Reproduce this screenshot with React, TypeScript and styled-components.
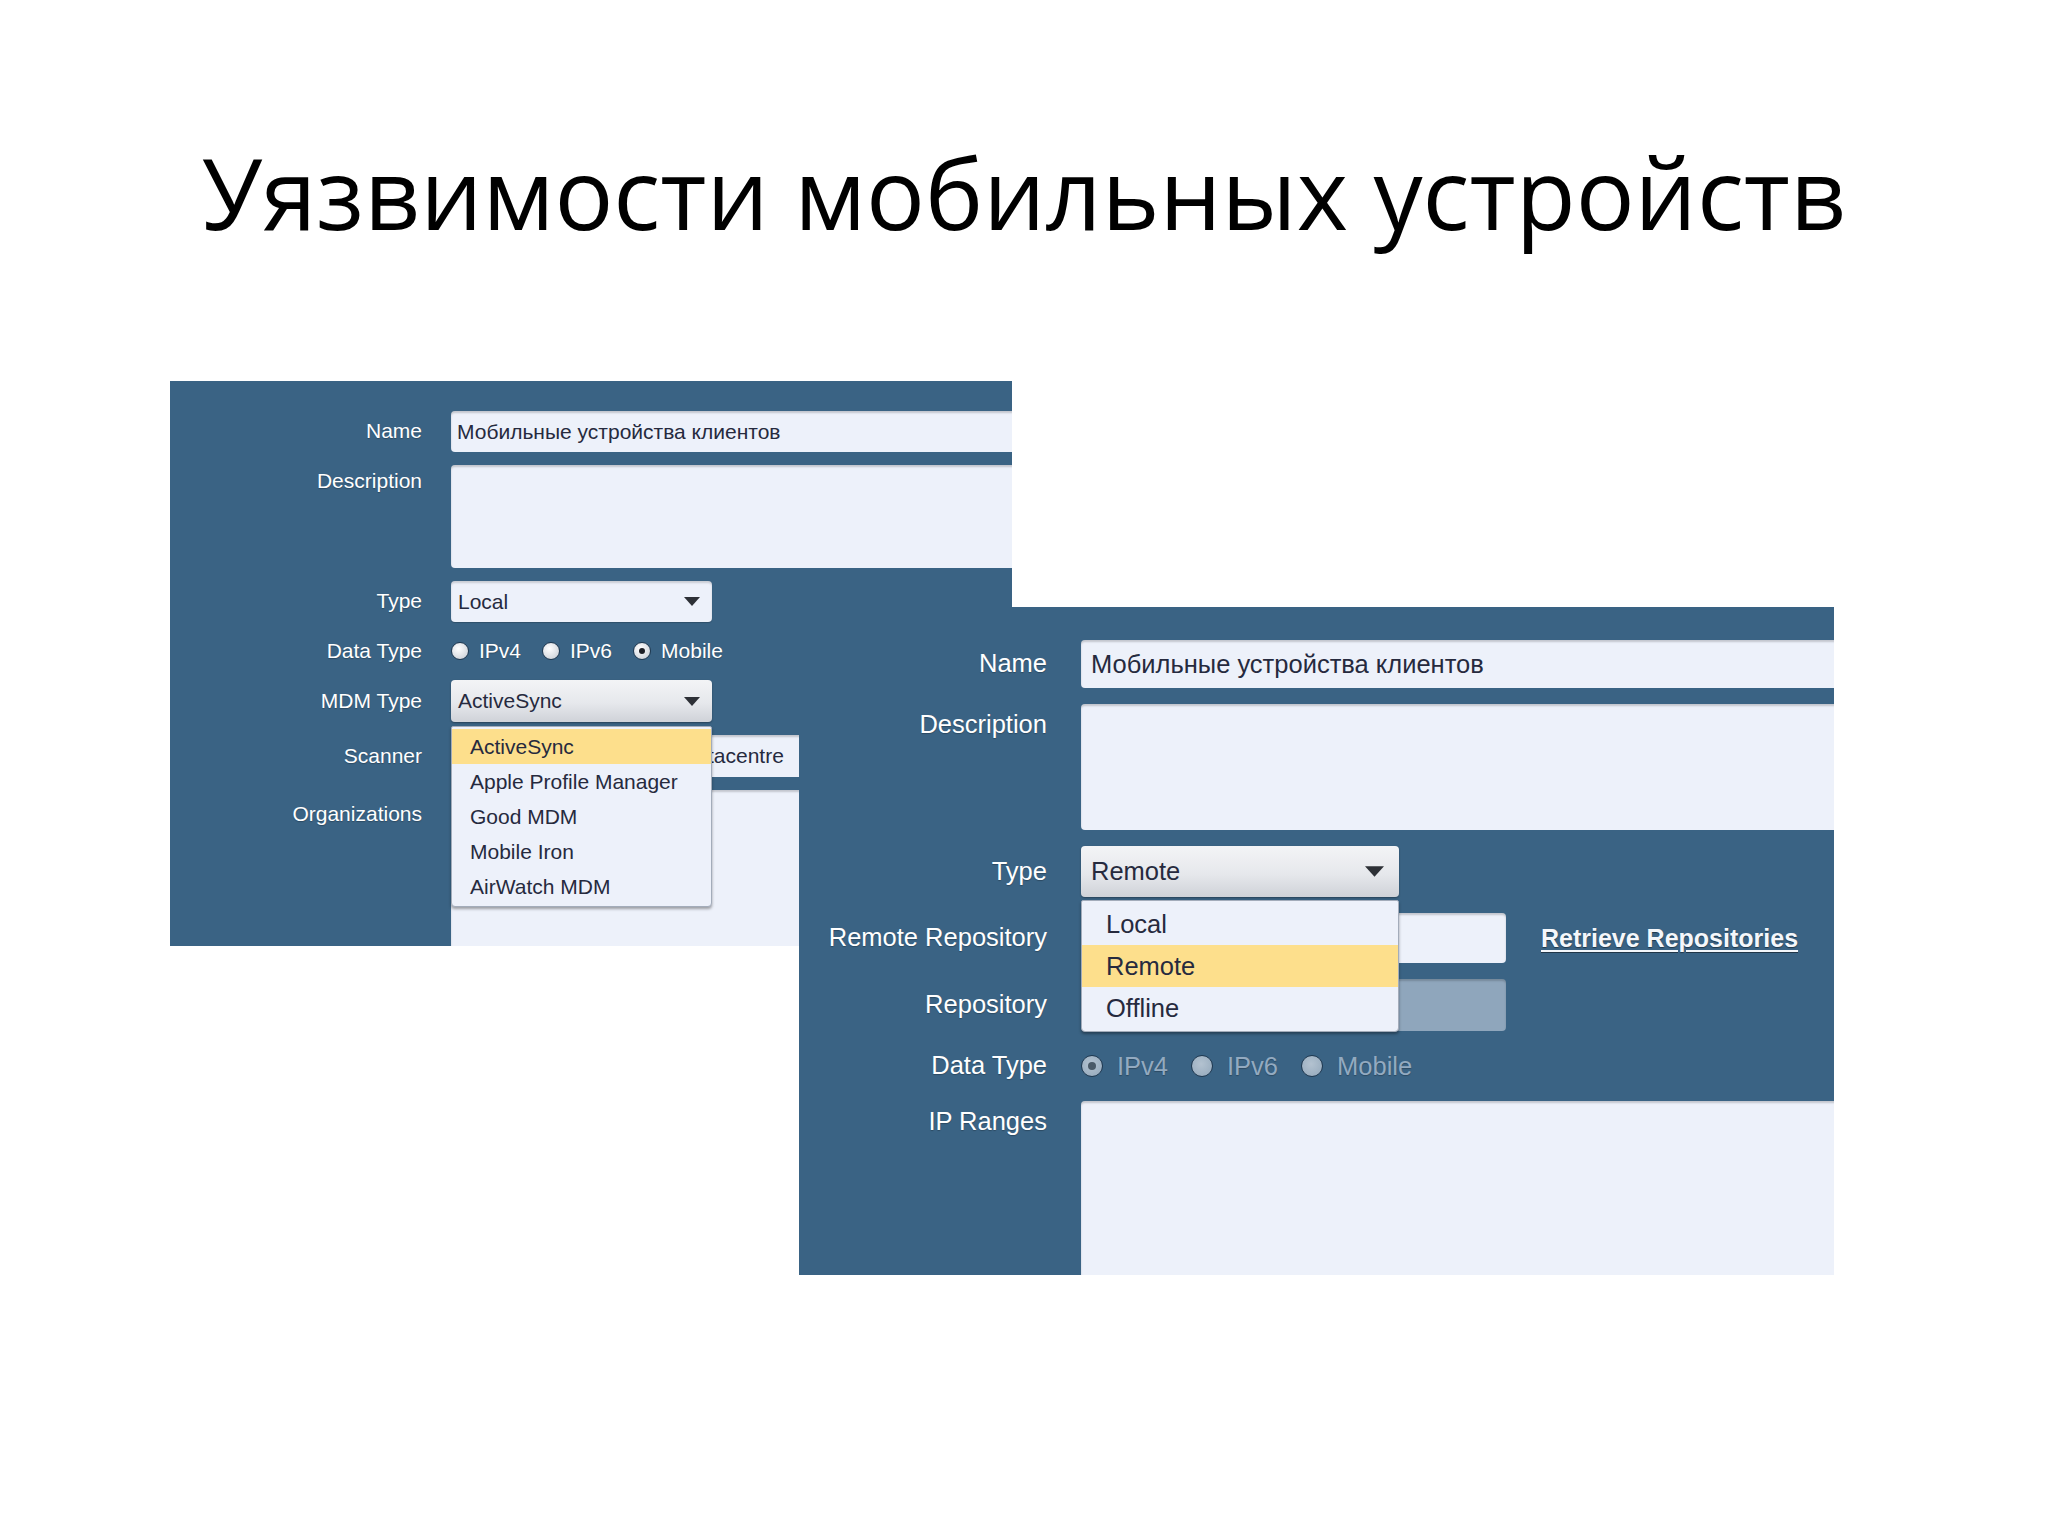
import React from 'react';
import styled, { createGlobalStyle, css } from 'styled-components';

const GlobalStyle = createGlobalStyle`
  html, body {
    margin: 0;
    padding: 0;
    background: #ffffff;
  }
  body {
    width: 2048px;
    height: 1536px;
    overflow: hidden;
    font-family: "Liberation Sans", Arial, sans-serif;
  }
`;

const PANEL_BLUE = '#3a6384';
const FIELD_BG = '#edf1fa';
const FIELD_TEXT = '#262a3e';
const HIGHLIGHT = '#fddf8c';

const Slide = styled.div`
  width: 2048px;
  height: 1536px;
  display: flex;
  flex-direction: column;
  background: #ffffff;
`;

const Title = styled.h1`
  margin: 0;
  height: 300px;
  box-sizing: border-box;
  padding-top: 143px;
  text-align: center;
  font-family: "Open Sans", "Noto Sans", sans-serif;
  font-weight: 400;
  font-size: 98px;
  line-height: 98px;
  color: #000000;
`;

const Stage = styled.div`
  position: relative;
  flex: 1;
`;

// the two screenshots lie on the slide like windows on a desktop
const Shot = styled.div<{ $left: number; $top: number; $width: number; $height: number }>`
  position: absolute;
  left: ${p => p.$left}px;
  top: ${p => p.$top}px;
  width: ${p => p.$width}px;
  height: ${p => p.$height}px;
  background: ${PANEL_BLUE};
  overflow: hidden;
`;

const Form = styled.div<{ $labelWidth: number; $colGap: number; $rowGap: number; $padTop: number; $font: number }>`
  display: grid;
  grid-template-columns: ${p => p.$labelWidth}px 1fr;
  column-gap: ${p => p.$colGap}px;
  row-gap: ${p => p.$rowGap}px;
  padding-top: ${p => p.$padTop}px;
  font-size: ${p => p.$font}px;
`;

const Label = styled.div<{ $pad?: number }>`
  color: #ffffff;
  text-align: right;
  line-height: 1.15;
  white-space: nowrap;
  text-shadow: 0 1px 1px rgba(0, 0, 0, 0.25);
  ${p =>
    p.$pad !== undefined
      ? css`
          align-self: start;
          padding-top: ${p.$pad}px;
        `
      : css`
          align-self: center;
        `}
`;

const FieldCell = styled.div`
  position: relative;
  display: flex;
  align-items: center;
  min-width: 0;
`;

const TextInput = styled.div<{ $w: number; $h: number; $pad: number; $disabled?: boolean }>`
  flex: none;
  width: ${p => p.$w}px;
  height: ${p => p.$h}px;
  box-sizing: border-box;
  padding-left: ${p => p.$pad}px;
  display: flex;
  align-items: center;
  border-radius: 4px;
  background: ${p => (p.$disabled ? '#8fa6bc' : FIELD_BG)};
  box-shadow: inset 0 2px 2px rgba(0, 0, 0, 0.18);
  color: ${FIELD_TEXT};
  white-space: nowrap;
  overflow: hidden;
`;

const TextArea = styled(TextInput)`
  align-items: flex-start;
`;

const Select = styled.div<{ $w: number; $h: number; $pad: number; $active?: boolean; $arrowRight: number }>`
  position: relative;
  width: ${p => p.$w}px;
  height: ${p => p.$h}px;
  box-sizing: border-box;
  padding-left: ${p => p.$pad}px;
  padding-right: ${p => p.$arrowRight}px;
  display: flex;
  align-items: center;
  justify-content: space-between;
  border-radius: 4px;
  color: ${FIELD_TEXT};
  ${p =>
    p.$active
      ? css`
          background: linear-gradient(#f3f4f6 0%, #e6e8ec 55%, #cfd2d8 100%);
          box-shadow: 0 1px 2px rgba(0, 0, 0, 0.35);
        `
      : css`
          background: ${FIELD_BG};
          box-shadow: inset 0 2px 2px rgba(0, 0, 0, 0.15), 0 1px 1px rgba(0, 0, 0, 0.2);
        `}
`;

const Menu = styled.div<{ $w: number; $gap: number }>`
  position: absolute;
  left: 0;
  top: calc(100% + ${p => p.$gap}px);
  width: ${p => p.$w}px;
  box-sizing: border-box;
  padding: 2px 0;
  background: ${FIELD_BG};
  border: 1px solid #a3acba;
  border-radius: 2px 2px 4px 4px;
  box-shadow: 0 2px 3px rgba(0, 0, 0, 0.35);
  z-index: 2;
`;

const MenuItem = styled.div<{ $h: number; $pad: number; $selected?: boolean }>`
  height: ${p => p.$h}px;
  padding-left: ${p => p.$pad}px;
  display: flex;
  align-items: center;
  color: ${FIELD_TEXT};
  white-space: nowrap;
  background: ${p => (p.$selected ? HIGHLIGHT : 'transparent')};
`;

const RadioRow = styled.div<{ $h: number; $gap: number; $disabled?: boolean }>`
  height: ${p => p.$h}px;
  display: flex;
  align-items: center;
  gap: ${p => p.$gap}px;
  color: ${p => (p.$disabled ? '#93aac0' : '#ffffff')};
  text-shadow: 0 1px 1px rgba(0, 0, 0, 0.25);
`;

const RadioOption = styled.span<{ $gap: number }>`
  display: inline-flex;
  align-items: center;
  gap: ${p => p.$gap}px;
`;

const RadioDot = styled.span<{ $size: number; $checked?: boolean; $disabled?: boolean }>`
  position: relative;
  width: ${p => p.$size}px;
  height: ${p => p.$size}px;
  box-sizing: border-box;
  border-radius: 50%;
  border: 1px solid #1f3850;
  background: ${p =>
    p.$disabled
      ? 'radial-gradient(circle at 45% 40%, #b3c2d0, #93a8bb)'
      : 'radial-gradient(circle at 40% 35%, #ffffff, #d3d7dd 75%, #b9bec6)'};
  ${p =>
    p.$checked &&
    css`
      &::after {
        content: '';
        position: absolute;
        left: 50%;
        top: 50%;
        width: ${Math.round(p.$size * 0.36)}px;
        height: ${Math.round(p.$size * 0.36)}px;
        transform: translate(-50%, -50%);
        border-radius: 50%;
        background: ${p.$disabled ? '#4a5a68' : '#1d1f26'};
      }
    `}
`;

const LinkText = styled.span<{ $ml: number }>`
  margin-left: ${p => p.$ml}px;
  font-weight: 700;
  font-size: 25px;
  color: #f4f7fb;
  text-decoration: underline;
  text-underline-offset: 3px;
  text-shadow: 0 1px 1px rgba(0, 0, 0, 0.45);
  white-space: nowrap;
`;

const Arrow: React.FC<{ w: number; h: number }> = ({ w, h }) => (
  <svg width={w} height={h} viewBox="0 0 16 9">
    <path d="M0 0 H16 L8 9 Z" fill="#2d3036" />
  </svg>
);

type Radio = { label: string; checked?: boolean };

const Radios: React.FC<{
  items: Radio[];
  h: number;
  size: number;
  gap: number;
  inner: number;
  disabled?: boolean;
}> = ({ items, h, size, gap, inner, disabled }) => (
  <RadioRow $h={h} $gap={gap} $disabled={disabled}>
    {items.map(r => (
      <RadioOption key={r.label} $gap={inner}>
        <RadioDot $size={size} $checked={r.checked} $disabled={disabled} />
        {r.label}
      </RadioOption>
    ))}
  </RadioRow>
);

const mdmTypes = ['ActiveSync', 'Apple Profile Manager', 'Good MDM', 'Mobile Iron', 'AirWatch MDM'];
const repoTypes = ['Local', 'Remote', 'Offline'];

const BackScreen: React.FC = () => (
  <Shot $left={170} $top={81} $width={842} $height={565}>
    <Form $labelWidth={252} $colGap={29} $rowGap={13} $padTop={30} $font={21}>
      <Label>Name</Label>
      <FieldCell>
        <TextInput $w={700} $h={41} $pad={6}>Мобильные устройства клиентов</TextInput>
      </FieldCell>

      <Label $pad={4}>Description</Label>
      <FieldCell>
        <TextArea $w={700} $h={103} $pad={6} />
      </FieldCell>

      <Label>Type</Label>
      <FieldCell>
        <Select $w={261} $h={41} $pad={7} $arrowRight={12}>
          Local
          <Arrow w={16} h={9} />
        </Select>
      </FieldCell>

      <Label>Data Type</Label>
      <FieldCell>
        <Radios
          h={32}
          size={18}
          gap={21}
          inner={10}
          items={[{ label: 'IPv4' }, { label: 'IPv6' }, { label: 'Mobile', checked: true }]}
        />
      </FieldCell>

      <Label>MDM Type</Label>
      <FieldCell>
        <Select $w={261} $h={42} $pad={7} $arrowRight={12} $active>
          ActiveSync
          <Arrow w={16} h={9} />
          <Menu $w={261} $gap={4}>
            {mdmTypes.map((m, i) => (
              <MenuItem key={m} $h={35} $pad={18} $selected={i === 0}>
                {m}
              </MenuItem>
            ))}
          </Menu>
        </Select>
      </FieldCell>

      <Label>Scanner</Label>
      <FieldCell>
        <TextInput $w={500} $h={42} $pad={6}>Nessus Scanner - Main Datacentre</TextInput>
      </FieldCell>

      <Label $pad={12}>Organizations</Label>
      <FieldCell>
        <TextArea $w={500} $h={200} $pad={6} />
      </FieldCell>
    </Form>
  </Shot>
);

const FrontScreen: React.FC = () => (
  <Shot $left={799} $top={307} $width={1035} $height={668}>
    <Form $labelWidth={248} $colGap={34} $rowGap={16} $padTop={33} $font={25.5}>
      <Label>Name</Label>
      <FieldCell>
        <TextInput $w={900} $h={48} $pad={10}>Мобильные устройства клиентов</TextInput>
      </FieldCell>

      <Label $pad={6}>Description</Label>
      <FieldCell>
        <TextArea $w={900} $h={126} $pad={10} />
      </FieldCell>

      <Label>Type</Label>
      <FieldCell>
        <Select $w={318} $h={51} $pad={10} $arrowRight={15} $active>
          Remote
          <Arrow w={19} h={11} />
          <Menu $w={318} $gap={3}>
            {repoTypes.map((m, i) => (
              <MenuItem key={m} $h={42} $pad={24} $selected={i === 1}>
                {m}
              </MenuItem>
            ))}
          </Menu>
        </Select>
      </FieldCell>

      <Label>Remote Repository</Label>
      <FieldCell>
        <TextInput $w={425} $h={50} $pad={10} />
        <LinkText $ml={35}>Retrieve Repositories</LinkText>
      </FieldCell>

      <Label>Repository</Label>
      <FieldCell>
        <TextInput $w={425} $h={52} $pad={10} $disabled />
      </FieldCell>

      <Label>Data Type</Label>
      <FieldCell>
        <Radios
          h={38}
          size={22}
          gap={23}
          inner={14}
          disabled
          items={[{ label: 'IPv4', checked: true }, { label: 'IPv6' }, { label: 'Mobile' }]}
        />
      </FieldCell>

      <Label $pad={6}>IP Ranges</Label>
      <FieldCell>
        <TextArea $w={900} $h={220} $pad={10} />
      </FieldCell>
    </Form>
  </Shot>
);

export default function App() {
  return (
    <>
      <GlobalStyle />
      <Slide>
        <Title>Уязвимости мобильных устройств</Title>
        <Stage>
          <BackScreen />
          <FrontScreen />
        </Stage>
      </Slide>
    </>
  );
}
